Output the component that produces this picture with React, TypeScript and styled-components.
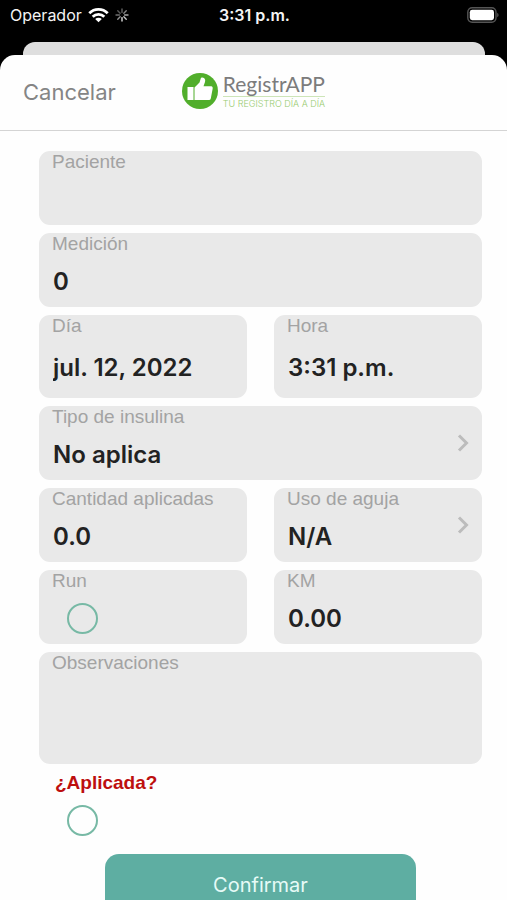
import React from "react";
import styled, { createGlobalStyle } from "styled-components";

const system = `Inter, "Liberation Sans", sans-serif`;
const helvetica = `"Liberation Sans", Arial, sans-serif`;

const GlobalStyle = createGlobalStyle`
  *, *::before, *::after { box-sizing: border-box; }
  body { margin: 0; background: #000; font-family: ${system}; }
  input, select, textarea, button { font: inherit; margin: 0; }
`;

const Screen = styled.div`
  display: flex;
  flex-direction: column;
  height: 100vh;
  background: #000;
`;

const StatusBar = styled.header`
  flex: none;
  display: grid;
  grid-template-columns: 1fr auto 1fr;
  align-items: center;
  height: 42px;
  padding: 0 8px 12px 10px;
  color: #f4f4f4;
  font-size: 16px;
  line-height: 20px;
`;

const Carrier = styled.div`
  display: flex;
  align-items: center;
  gap: 6px;
`;

const Clock = styled.time`
  font-weight: 600;
`;

const BatteryIcon = styled.svg`
  justify-self: end;
`;

const BackSheet = styled.div`
  flex: none;
  height: 13px;
  margin: 0 22px 0 23px;
  border-radius: 12px 12px 0 0;
  background: #dedede;
`;

const Sheet = styled.main`
  flex: 1;
  min-height: 0;
  display: flex;
  flex-direction: column;
  border-radius: 15px 15px 0 0;
  background: #fefefe;
  overflow: hidden;
`;

const NavBar = styled.nav`
  flex: none;
  display: grid;
  grid-template-columns: 1fr auto 1fr;
  align-items: center;
  height: 76px;
  padding: 0 23px 3px;
  border-bottom: 1px solid #d4d4d4;
`;

const CancelButton = styled.button`
  justify-self: start;
  padding: 2px 0 0;
  border: 0;
  background: none;
  color: #858585;
  font-size: 22px;
  line-height: 28px;
`;

const Logo = styled.div`
  display: flex;
  align-items: center;
  gap: 5px;
`;

const LogoText = styled.div`
  display: flex;
  flex-direction: column;
`;

const LogoName = styled.span`
  border-bottom: 1px solid #cde5b8;
  color: #7c7c7c;
  font-family: Lato, sans-serif;
  font-size: 21px;
  line-height: 24px;
`;

const LogoTagline = styled.span`
  color: #98cb70;
  font-size: 9px;
  font-weight: 300;
  line-height: 14px;
`;

const Form = styled.form`
  flex: 1;
  min-height: 0;
  display: flex;
  flex-direction: column;
  gap: 8px;
  padding: 20px 25px 20px 39px;
  overflow-y: auto;
  scrollbar-width: none;
`;

const Row = styled.div`
  flex: none;
  display: grid;
  grid-template-columns: 1fr 1fr;
  gap: 27px;
`;

const Card = styled.div<{ $height?: number }>`
  flex: none;
  position: relative;
  display: flex;
  flex-direction: column;
  min-width: 0;
  height: ${(p) => p.$height ?? 74}px;
  border-radius: 11px;
  background: #e9e9e9;
`;

const Label = styled.label`
  padding-left: 13px;
  color: #a3a3a3;
  font-family: ${helvetica};
  font-size: 19px;
  line-height: 22px;
`;

const valueStyle = `
  flex: 1;
  width: 100%;
  min-height: 0;
  padding: 0 14px;
  border: 0;
  border-radius: 0 0 11px 11px;
  background: none;
  color: #222;
  font-size: 24px;
  font-weight: 600;
  appearance: none;
  outline: none;
  resize: none;
`;

const TextInput = styled.input`${valueStyle}`;
const TextArea = styled.textarea`${valueStyle}`;
const Select = styled.select`${valueStyle}`;

const Chevron = styled.svg`
  position: absolute;
  right: 13px;
  top: 50%;
  transform: translateY(-50%);
  pointer-events: none;
`;

const RoundCheck = styled.input`
  appearance: none;
  flex: none;
  width: 31px;
  height: 31px;
  margin: 11px 0 0 28px;
  border: 2px solid #77b9a5;
  border-radius: 50%;
  &:checked { background: #5eaea2; }
`;

const Applied = styled.div`
  flex: none;
  display: flex;
  flex-direction: column;
`;

const AppliedLabel = styled.label`
  padding-left: 16px;
  color: #bd0f0f;
  font-family: ${helvetica};
  font-size: 19px;
  font-weight: 700;
  line-height: 22px;
`;

const ConfirmButton = styled.button`
  flex: none;
  align-self: center;
  width: 70%;
  height: 62px;
  margin: 10px 0 0;
  border: 0;
  border-radius: 14px;
  background: #5eaea2;
  color: #e6fbf7;
  font-size: 20px;
`;

function TextField({ id, label, value = "", height }: { id: string; label: string; value?: string; height?: number }) {
  return (
    <Card $height={height}>
      <Label htmlFor={id}>{label}</Label>
      <TextInput id={id} type="text" defaultValue={value} />
    </Card>
  );
}

function SelectField({ id, label, value }: { id: string; label: string; value: string }) {
  return (
    <Card>
      <Label htmlFor={id}>{label}</Label>
      <Select id={id} defaultValue={value}>
        <option>{value}</option>
      </Select>
      <Chevron width="12" height="18" viewBox="0 0 12 18" fill="none" stroke="#bcbcbc" strokeWidth="3" aria-hidden="true">
        <path d="M2 1.5 9.5 9 2 16.5" />
      </Chevron>
    </Card>
  );
}

const spokes = [1, 0.9, 0.75, 0.6, 0.45, 0.4, 0.5, 0.65];

export default function App() {
  return (
    <>
      <GlobalStyle />
      <Screen>
        <StatusBar>
          <Carrier>
            <span>Operador</span>
            <svg width="21" height="16" viewBox="0 0 21 16" fill="none" stroke="#fff" strokeWidth="2.8" aria-label="Wi-Fi">
              <path d="M1.3 6.2a13 13 0 0 1 18.4 0M4.7 9.7a8.2 8.2 0 0 1 11.6 0" />
              <path d="M10.5 15.2 7.2 12a4.7 4.7 0 0 1 6.6 0Z" fill="#fff" stroke="none" />
            </svg>
            <svg width="14" height="14" viewBox="0 0 14 14" stroke="#ddd" strokeWidth="1.4" strokeLinecap="round" aria-hidden="true">
              {spokes.map((o, i) => (
                <path key={i} d="M7 9.6V13" opacity={o} transform={`rotate(${-i * 45} 7 7)`} />
              ))}
            </svg>
          </Carrier>
          <Clock>3:31 p.m.</Clock>
          <BatteryIcon width="33" height="16" viewBox="0 0 33 16" aria-label="Batería">
            <rect x="1.8" y="0.8" width="28.2" height="14.4" rx="4.4" fill="none" stroke="#555" strokeWidth="1.4" />
            <rect x="3.8" y="2.8" width="24.2" height="10.4" rx="2.4" fill="#fff" />
            <path d="M31.2 5.8q1.4 .7 1.4 2.200t-1.400 2.200Z" fill="#555" />
          </BatteryIcon>
        </StatusBar>
        <BackSheet />
        <Sheet>
          <NavBar>
            <CancelButton type="button">Cancelar</CancelButton>
            <Logo>
              <svg width="36" height="36" viewBox="0 0 36 36" aria-hidden="true">
                <circle cx="18" cy="18" r="18" fill="#51ae2b" />
                <rect x="5.5" y="14" width="6" height="13" fill="#fff" />
                <path
                  fill="#fff"
                  d="M12.500 14.500L17.500 9.500L19 4.800Q20.500 3.800 22.300 5.200Q23.800 6.800 23 9L21.500 13.300H29.500Q31 13.600 30.700 15.500L28.800 25.500Q28.400 27 27 27H12.500Z"
                />
              </svg>
              <LogoText>
                <LogoName>RegistrAPP</LogoName>
                <LogoTagline>TU REGISTRO DÍA A DÍA</LogoTagline>
              </LogoText>
            </Logo>
          </NavBar>
          <Form onSubmit={(e) => e.preventDefault()}>
            <TextField id="paciente" label="Paciente" />
            <TextField id="medicion" label="Medición" value="0" />
            <Row>
              <TextField id="dia" label="Día" value="jul. 12, 2022" height={83} />
              <TextField id="hora" label="Hora" value="3:31 p.m." height={83} />
            </Row>
            <SelectField id="insulina" label="Tipo de insulina" value="No aplica" />
            <Row>
              <TextField id="cantidad" label="Cantidad aplicadas" value="0.0" />
              <SelectField id="aguja" label="Uso de aguja" value="N/A" />
            </Row>
            <Row>
              <Card>
                <Label htmlFor="run">Run</Label>
                <RoundCheck id="run" type="checkbox" />
              </Card>
              <TextField id="km" label="KM" value="0.00" />
            </Row>
            <Card $height={112}>
              <Label htmlFor="observaciones">Observaciones</Label>
              <TextArea id="observaciones" />
            </Card>
            <Applied>
              <AppliedLabel htmlFor="aplicada">¿Aplicada?</AppliedLabel>
              <RoundCheck id="aplicada" type="checkbox" />
            </Applied>
            <ConfirmButton type="submit">Confirmar</ConfirmButton>
          </Form>
        </Sheet>
      </Screen>
    </>
  );
}
